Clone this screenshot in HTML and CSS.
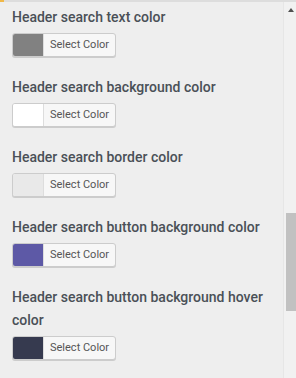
FILE: index.html
```html
<!DOCTYPE html>
<html lang="en">
<head>
    <meta charset="UTF-8">
    <meta name="viewport" content="width=device-width, initial-scale=1.0">
    <title>Header search colors</title>
    <link rel="stylesheet" href="styles.css">
</head>
<body>
    <div class="topline"><span class="accent"></span></div>
    <div class="panel">
        <div class="controls">
            <div class="control">
                <h3>Header search text color</h3>
                <button class="color-btn"><span class="swatch" style="background:#818181"></span><span class="label">Select Color</span></button>
            </div>
            <div class="control">
                <h3>Header search background color</h3>
                <button class="color-btn"><span class="swatch" style="background:#ffffff"></span><span class="label">Select Color</span></button>
            </div>
            <div class="control">
                <h3>Header search border color</h3>
                <button class="color-btn"><span class="swatch" style="background:#e9e9e9"></span><span class="label">Select Color</span></button>
            </div>
            <div class="control">
                <h3>Header search button background color</h3>
                <button class="color-btn"><span class="swatch" style="background:#5d59a6"></span><span class="label">Select Color</span></button>
            </div>
            <div class="control">
                <h3>Header search button background hover color</h3>
                <button class="color-btn"><span class="swatch" style="background:#363a4f"></span><span class="label">Select Color</span></button>
            </div>
        </div>
        <div class="scrollbar">
            <span class="arrow"></span>
            <span class="thumb"></span>
        </div>
    </div>
</body>
</html>
```

FILE: styles.css
```css
html, body {
    margin: 0;
    padding: 0;
    height: 100%;
}
body {
    font-family: Roboto, "Noto Sans", Arial, sans-serif;
    background-color: #eeeeee;
    overflow: hidden;
    display: flex;
    flex-direction: column;
}
.topline {
    height: 2px;
    background-color: #dddddd;
    flex: none;
}
.topline .accent {
    display: block;
    width: 4px;
    height: 2px;
    background-color: #f0b849;
}
.panel {
    flex: 1;
    display: flex;
}
.controls {
    flex: 1;
    padding: 4px 0 0 12px;
}
.control {
    margin-bottom: 19px;
}
.control h3 {
    margin: 0 0 4px;
    font-size: 14px;
    font-weight: 500;
    line-height: 23px;
    color: #4a5057;
    padding-right: 10px;
}
.color-btn {
    display: flex;
    align-items: stretch;
    height: 24px;
    padding: 0;
    border: 1px solid #cccccc;
    border-radius: 3px;
    background-color: #f7f7f7;
    box-shadow: 0 1px 0 #cccccc;
    overflow: hidden;
    font-family: inherit;
    cursor: pointer;
}
.color-btn .swatch {
    width: 30px;
    border-right: 1px solid #dddddd;
}
.color-btn .label {
    padding: 0 6px 0 6px;
    font-size: 11px;
    line-height: 22px;
    color: #555555;
}
.scrollbar {
    width: 12px;
    flex: none;
    background-color: #f1f1f1;
    border-left: 1px solid #e6e6e6;
    display: flex;
    flex-direction: column;
    align-items: flex-end;
}
.scrollbar .arrow {
    margin: 6px 2px 0 0;
    width: 0;
    height: 0;
    border-left: 3px solid transparent;
    border-right: 3px solid transparent;
    border-bottom: 4px solid #505050;
}
.scrollbar .thumb {
    margin-top: 201px;
    width: 10px;
    height: 98px;
    background-color: #c1c1c1;
}
```
